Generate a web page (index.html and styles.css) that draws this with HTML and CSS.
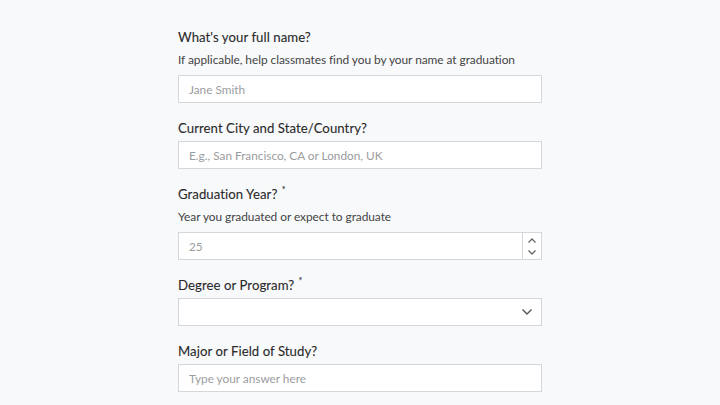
FILE: index.html
```html
<!DOCTYPE html>
<html>
<head>
<meta charset="utf-8">
<link rel="stylesheet" href="styles.css">
</head>
<body>
<form class="form">
  <div class="field">
    <label class="label">What's your full name?</label>
    <p class="help">If applicable, help classmates find you by your name at graduation</p>
    <input class="input" type="text" placeholder="Jane Smith">
  </div>
  <div class="field">
    <label class="label">Current City and State/Country?</label>
    <input class="input" type="text" placeholder="E.g., San Francisco, CA or London, UK">
  </div>
  <div class="field">
    <label class="label">Graduation Year? <span class="req">*</span></label>
    <p class="help">Year you graduated or expect to graduate</p>
    <div class="number">
      <input class="input number-input" type="text" placeholder="25">
      <div class="spinner">
        <svg width="10" height="7" viewBox="0 0 10 7"><path d="M1.5 5.5 L5 2 L8.5 5.5" fill="none" stroke="#666" stroke-width="1.3"/></svg>
        <svg width="10" height="7" viewBox="0 0 10 7"><path d="M1.5 1.5 L5 5 L8.5 1.5" fill="none" stroke="#666" stroke-width="1.3"/></svg>
      </div>
    </div>
  </div>
  <div class="field">
    <label class="label">Degree or Program? <span class="req">*</span></label>
    <div class="select">
      <svg class="chev" width="12" height="8" viewBox="0 0 12 8"><path d="M1.5 1.5 L6 6 L10.5 1.5" fill="none" stroke="#555" stroke-width="1.4"/></svg>
    </div>
  </div>
  <div class="field">
    <label class="label">Major or Field of Study?</label>
    <input class="input" type="text" placeholder="Type your answer here">
  </div>
</form>
</body>
</html>
```
FILE: styles.css
```css
html, body {
  margin: 0;
  padding: 0;
  background: #f8f9fb;
}
body {
  font-family: Lato, "Open Sans", sans-serif;
  color: #333;
}
.form {
  width: 364px;
  margin: 0 auto;
  padding-top: 27px;
  display: flex;
  flex-direction: column;
  gap: 15px;
}
.field {
  display: flex;
  flex-direction: column;
}
.label {
  display: block;
  height: 20px;
  font-size: 13.2px;
  line-height: 20px;
  font-weight: 400;
  color: #2a2a2a;
  margin-bottom: 3px;
  letter-spacing: 0.05px;
  -webkit-text-stroke: 0.1px #2a2a2a;
}
.req {
  font-size: 9px;
  line-height: 0;
  position: relative;
  top: -6px;
  margin-left: 1px;
}
.help {
  margin: 0 0 5px 0;
  height: 20px;
  font-size: 11.9px;
  line-height: 20px;
  color: #444;
  letter-spacing: -0.05px;
}
.input {
  box-sizing: border-box;
  width: 364px;
  height: 28px;
  margin: 0;
  border: 1px solid #d3d6db;
  background: #fff;
  padding: 0 10px;
  font-family: Lato, "Open Sans", sans-serif;
  font-size: 11.8px;
  color: #333;
  outline: none;
  border-radius: 0;
}
.input::placeholder {
  color: #9a9ca0;
}
.number {
  display: flex;
  width: 364px;
  height: 28px;
  box-sizing: border-box;
  border: 1px solid #d3d6db;
  background: #fff;
}
.number-input {
  border: none;
  height: 26px;
  flex: 1;
  width: auto;
}
.spinner {
  width: 18px;
  border-left: 1px solid #d3d6db;
  display: flex;
  flex-direction: column;
  align-items: center;
  justify-content: center;
  gap: 5px;
}
.select {
  box-sizing: border-box;
  width: 364px;
  height: 28px;
  border: 1px solid #d3d6db;
  background: #fff;
  display: flex;
  align-items: center;
  justify-content: flex-end;
  padding-right: 8px;
}
```
